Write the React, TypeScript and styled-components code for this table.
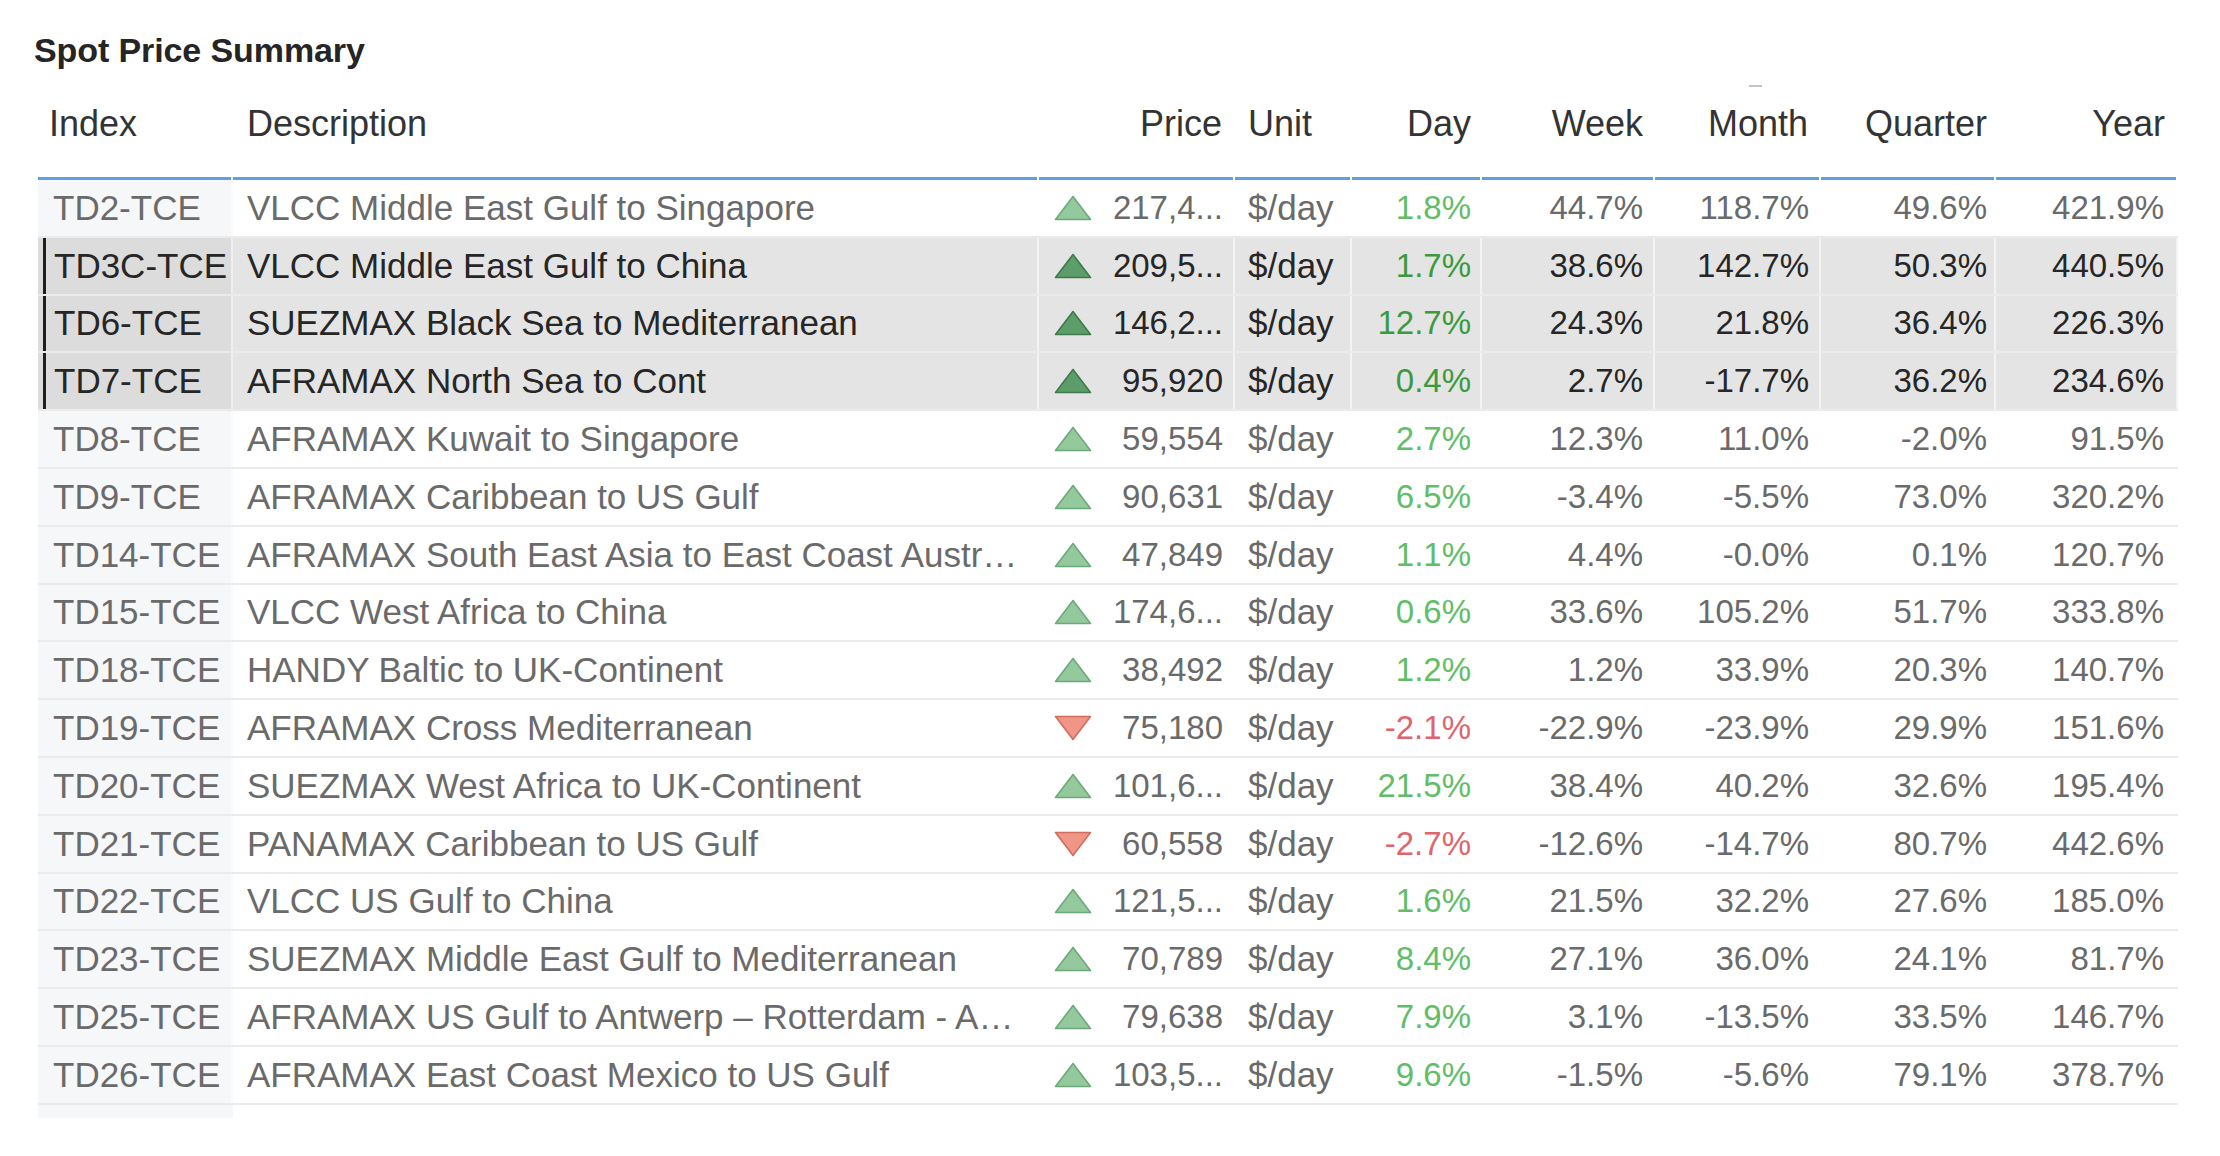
import React from "react";
import styled, { createGlobalStyle, css } from "styled-components";

const GlobalStyle = createGlobalStyle`
  html, body {
    margin: 0;
    padding: 0;
    background: #ffffff;
  }
  body {
    font-family: "Liberation Sans", Arial, sans-serif;
  }
`;

const COLS = "195px 806px 196px 117px 130px 173px 166px 175px 182px";

type Dir = "up" | "down";
interface RowData {
  index: string;
  desc: string;
  dir: Dir;
  price: string;
  unit: string;
  day: string;
  week: string;
  month: string;
  quarter: string;
  year: string;
  selected?: boolean;
}

const rows: RowData[] = [
  { index: "TD2-TCE", desc: "VLCC Middle East Gulf to Singapore", dir: "up", price: "217,4...", unit: "$/day", day: "1.8%", week: "44.7%", month: "118.7%", quarter: "49.6%", year: "421.9%" },
  { index: "TD3C-TCE", desc: "VLCC Middle East Gulf to China", dir: "up", price: "209,5...", unit: "$/day", day: "1.7%", week: "38.6%", month: "142.7%", quarter: "50.3%", year: "440.5%", selected: true },
  { index: "TD6-TCE", desc: "SUEZMAX Black Sea to Mediterranean", dir: "up", price: "146,2...", unit: "$/day", day: "12.7%", week: "24.3%", month: "21.8%", quarter: "36.4%", year: "226.3%", selected: true },
  { index: "TD7-TCE", desc: "AFRAMAX North Sea to Cont", dir: "up", price: "95,920", unit: "$/day", day: "0.4%", week: "2.7%", month: "-17.7%", quarter: "36.2%", year: "234.6%", selected: true },
  { index: "TD8-TCE", desc: "AFRAMAX Kuwait to Singapore", dir: "up", price: "59,554", unit: "$/day", day: "2.7%", week: "12.3%", month: "11.0%", quarter: "-2.0%", year: "91.5%" },
  { index: "TD9-TCE", desc: "AFRAMAX Caribbean to US Gulf", dir: "up", price: "90,631", unit: "$/day", day: "6.5%", week: "-3.4%", month: "-5.5%", quarter: "73.0%", year: "320.2%" },
  { index: "TD14-TCE", desc: "AFRAMAX South East Asia to East Coast Austr…", dir: "up", price: "47,849", unit: "$/day", day: "1.1%", week: "4.4%", month: "-0.0%", quarter: "0.1%", year: "120.7%" },
  { index: "TD15-TCE", desc: "VLCC West Africa to China", dir: "up", price: "174,6...", unit: "$/day", day: "0.6%", week: "33.6%", month: "105.2%", quarter: "51.7%", year: "333.8%" },
  { index: "TD18-TCE", desc: "HANDY Baltic to UK-Continent", dir: "up", price: "38,492", unit: "$/day", day: "1.2%", week: "1.2%", month: "33.9%", quarter: "20.3%", year: "140.7%" },
  { index: "TD19-TCE", desc: "AFRAMAX Cross Mediterranean", dir: "down", price: "75,180", unit: "$/day", day: "-2.1%", week: "-22.9%", month: "-23.9%", quarter: "29.9%", year: "151.6%" },
  { index: "TD20-TCE", desc: "SUEZMAX West Africa to UK-Continent", dir: "up", price: "101,6...", unit: "$/day", day: "21.5%", week: "38.4%", month: "40.2%", quarter: "32.6%", year: "195.4%" },
  { index: "TD21-TCE", desc: "PANAMAX Caribbean to US Gulf", dir: "down", price: "60,558", unit: "$/day", day: "-2.7%", week: "-12.6%", month: "-14.7%", quarter: "80.7%", year: "442.6%" },
  { index: "TD22-TCE", desc: "VLCC US Gulf to China", dir: "up", price: "121,5...", unit: "$/day", day: "1.6%", week: "21.5%", month: "32.2%", quarter: "27.6%", year: "185.0%" },
  { index: "TD23-TCE", desc: "SUEZMAX Middle East Gulf to Mediterranean", dir: "up", price: "70,789", unit: "$/day", day: "8.4%", week: "27.1%", month: "36.0%", quarter: "24.1%", year: "81.7%" },
  { index: "TD25-TCE", desc: "AFRAMAX US Gulf to Antwerp – Rotterdam - A…", dir: "up", price: "79,638", unit: "$/day", day: "7.9%", week: "3.1%", month: "-13.5%", quarter: "33.5%", year: "146.7%" },
  { index: "TD26-TCE", desc: "AFRAMAX East Coast Mexico to US Gulf", dir: "up", price: "103,5...", unit: "$/day", day: "9.6%", week: "-1.5%", month: "-5.6%", quarter: "79.1%", year: "378.7%" },
];

const Page = styled.div`
  padding: 29px 0 0 38px;
  width: 2140px;
`;

const Title = styled.h1`
  margin: 0 0 0 -4px;
  font-size: 34px;
  line-height: 42px;
  height: 42px;
  font-weight: 700;
  color: #252525;
  letter-spacing: -0.1px;
`;

const Table = styled.div`
  display: flex;
  flex-direction: column;
`;

const HeaderRow = styled.div`
  display: grid;
  grid-template-columns: ${COLS};
  height: 109px;
`;

const HeadCell = styled.div<{ $align: "left" | "right"; $pl?: number; $pr?: number }>`
  position: relative;
  display: flex;
  align-items: center;
  justify-content: ${(p) => (p.$align === "right" ? "flex-end" : "flex-start")};
  padding: 0 ${(p) => p.$pr ?? 0}px 3px ${(p) => p.$pl ?? 0}px;
  font-size: 36px;
  color: #333333;
  white-space: nowrap;
  background: linear-gradient(#5f9fe6, #5f9fe6) left bottom / calc(100% - 2px) 3px no-repeat;
`;

const SortMark = styled.span`
  position: absolute;
  top: 14px;
  left: 94px;
  width: 13px;
  height: 2px;
  background: #c4c4c4;
`;

const BodyRow = styled.div<{ $selected?: boolean }>`
  display: grid;
  grid-template-columns: ${COLS};
  height: 55.8px;
  border-bottom: 2px solid #ebebeb;
  background: ${(p) => (p.$selected ? "#e4e4e4" : "#ffffff")};
  color: ${(p) => (p.$selected ? "#262626" : "#6a6a6a")};
`;

const Cell = styled.div<{ $align?: "left" | "right"; $pl?: number; $pr?: number; $num?: boolean }>`
  display: flex;
  align-items: center;
  justify-content: ${(p) => (p.$align === "right" ? "flex-end" : "flex-start")};
  padding: 0 ${(p) => p.$pr ?? 0}px 0 ${(p) => p.$pl ?? 0}px;
  font-size: ${(p) => (p.$num ? 33 : 35)}px;
  white-space: nowrap;
  overflow: hidden;
  border-right: 2px solid rgba(255, 255, 255, 0.55);
  min-width: 0;
`;

const IndexCell = styled(Cell)<{ $selected?: boolean }>`
  position: relative;
  background: ${(p) => (p.$selected ? "#dcdcdc" : "#f6f7f9")};
  ${(p) =>
    p.$selected &&
    css`
      &::before {
        content: "";
        position: absolute;
        left: 5px;
        top: 0;
        bottom: -2px;
        width: 3px;
        background: #1e1e1e;
      }
    `}
`;

const PriceCell = styled(Cell)`
  justify-content: space-between;
`;

const ChangeText = styled.span<{ $neg: boolean; $selected?: boolean }>`
  color: ${(p) => (p.$neg ? "#e0646e" : p.$selected ? "#3c9a3e" : "#62bd68")};
`;

const TailRow = styled.div`
  display: grid;
  grid-template-columns: ${COLS};
  height: 13px;
`;

const TailIndex = styled.div`
  background: #f6f7f9;
`;

const Arrow: React.FC<{ dir: Dir; selected?: boolean }> = ({ dir, selected }) => {
  const fill = dir === "down" ? "#ef9686" : selected ? "#5c9d6a" : "#94c99e";
  const stroke = dir === "down" ? "#cf6d5e" : selected ? "#3d7b4a" : "#6ca97a";
  const points = dir === "up" ? "19,1.5 36.5,24.5 1.5,24.5" : "1.5,1.5 36.5,1.5 19,24.5";
  return (
    <svg width="38" height="26" viewBox="0 0 38 26" aria-hidden="true">
      <polygon points={points} fill={fill} stroke={stroke} strokeWidth="1.6" strokeLinejoin="round" />
    </svg>
  );
};

const numCols: { key: keyof RowData; label: string; pr: number; hpr: number }[] = [
  { key: "week", label: "Week", pr: 10, hpr: 12 },
  { key: "month", label: "Month", pr: 10, hpr: 13 },
  { key: "quarter", label: "Quarter", pr: 7, hpr: 9 },
  { key: "year", label: "Year", pr: 12, hpr: 13 },
];

export default function App() {
  return (
    <>
      <GlobalStyle />
      <Page>
        <Title>Spot Price Summary</Title>
        <Table>
          <HeaderRow>
            <HeadCell $align="left" $pl={11}>Index</HeadCell>
            <HeadCell $align="left" $pl={14}>Description</HeadCell>
            <HeadCell $align="right" $pr={13}>Price</HeadCell>
            <HeadCell $align="left" $pl={13}>Unit</HeadCell>
            <HeadCell $align="right" $pr={11}>Day</HeadCell>
            {numCols.map((c) => (
              <HeadCell key={c.key} $align="right" $pr={c.hpr}>
                {c.key === "month" && <SortMark />}
                {c.label}
              </HeadCell>
            ))}
          </HeaderRow>
          {rows.map((r) => (
            <BodyRow key={r.index} $selected={r.selected}>
              <IndexCell $selected={r.selected} $pl={r.selected ? 16 : 15}>
                {r.index}
              </IndexCell>
              <Cell $pl={14}>{r.desc}</Cell>
              <PriceCell $pl={15} $pr={10} $num>
                <Arrow dir={r.dir} selected={r.selected} />
                <span>{r.price}</span>
              </PriceCell>
              <Cell $pl={13}>{r.unit}</Cell>
              <Cell $align="right" $pr={9} $num>
                <ChangeText $neg={r.day.startsWith("-")} $selected={r.selected}>
                  {r.day}
                </ChangeText>
              </Cell>
              {numCols.map((c) => (
                <Cell key={c.key} $align="right" $pr={c.pr} $num>
                  {r[c.key] as string}
                </Cell>
              ))}
            </BodyRow>
          ))}
          <TailRow>
            <TailIndex />
          </TailRow>
        </Table>
      </Page>
    </>
  );
}
